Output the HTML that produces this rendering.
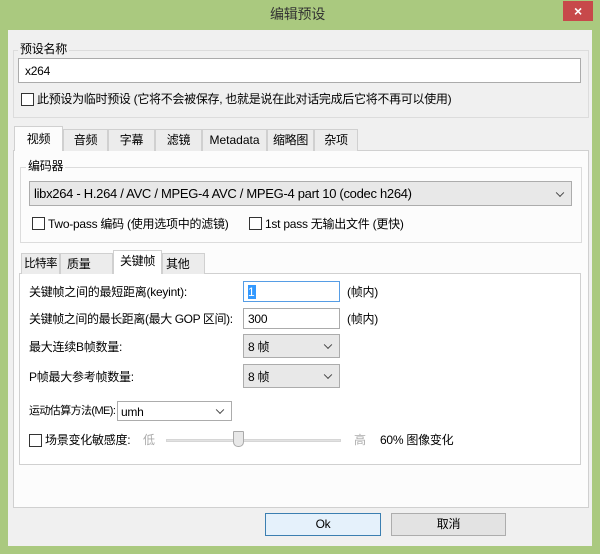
<!DOCTYPE html>
<html><head><meta charset="utf-8">
<style>
*{box-sizing:border-box;margin:0;padding:0}
body{width:600px;height:554px;background:#aac97f;position:relative;overflow:hidden;font-family:"Liberation Sans","Noto Sans CJK SC",sans-serif;font-size:12px;color:#000;letter-spacing:-0.25px}
.a{position:absolute}
.t{position:absolute;white-space:nowrap;line-height:14px}
.cb{position:absolute;width:13px;height:13px;border:1px solid #333;background:#fff}
.inp{position:absolute;background:#fff;border:1px solid #ababab}
.sel{position:absolute;background:#e8e8e8;border:1px solid #acacac}
.ar{position:absolute;right:8px;top:50%;width:6px;height:6px;border-right:1.5px solid #444;border-bottom:1.5px solid #444;transform:translateY(-70%) rotate(45deg)}
.tab{position:absolute;background:#ececec;border:1px solid #d0d0d0;border-bottom:none;text-align:center;line-height:20px;letter-spacing:-0.3px}
.tab.s{background:#fcfcfc}
.btn{position:absolute;background:#e3e3e3;border:1px solid #adadad;text-align:center;line-height:20px}
</style></head><body>
<div class="t" style="left:270px;top:7px;font-size:14px;color:#333">编辑预设</div>
<div class="a" style="left:563px;top:1px;width:30px;height:20px;background:#c7494a;color:#fff;text-align:center;line-height:20px;font-size:14px;font-weight:bold">×</div>
<div class="a" style="left:8px;top:30px;width:584px;height:516px;background:#f0f0f0"></div>
<div class="a" style="left:13px;top:50px;width:576px;height:68px;border:1px solid #dcdcdc"></div>
<div class="t" style="left:18px;top:42px;background:#f0f0f0;padding:0 2px">预设名称</div>
<div class="inp" style="left:18px;top:58px;width:563px;height:25px"></div>
<div class="t" style="left:25px;top:64px">x264</div>
<div class="cb" style="left:21px;top:93px"></div>
<div class="t" style="left:37px;top:92px;letter-spacing:-0.3px">此预设为临时预设 (它将不会被保存, 也就是说在此对话完成后它将不再可以使用)</div>
<div class="a" style="left:13px;top:150px;width:576px;height:358px;background:#fcfcfc;border:1px solid #d0d0d0"></div>
<div class="tab" style="left:63px;top:129px;width:45px;height:22px">音频</div>
<div class="tab" style="left:108px;top:129px;width:47px;height:22px">字幕</div>
<div class="tab" style="left:155px;top:129px;width:47px;height:22px">滤镜</div>
<div class="tab" style="left:202px;top:129px;width:65px;height:22px;letter-spacing:0">Metadata</div>
<div class="tab" style="left:267px;top:129px;width:47px;height:22px">缩略图</div>
<div class="tab" style="left:314px;top:129px;width:44px;height:22px">杂项</div>
<div class="tab s" style="left:14px;top:126px;width:49px;height:25px;line-height:24px">视频</div>
<div class="a" style="left:20px;top:167px;width:562px;height:76px;border:1px solid #dcdcdc"></div>
<div class="t" style="left:26px;top:159px;background:#fcfcfc;padding:0 2px">编码器</div>
<div class="sel" style="left:29px;top:181px;width:543px;height:25px"><span class="t" style="left:4px;top:5px;font-size:13px;letter-spacing:-0.3px">libx264 - H.264 / AVC / MPEG-4 AVC / MPEG-4 part 10 (codec h264)</span><i class="ar"></i></div>
<div class="cb" style="left:32px;top:217px"></div>
<div class="t" style="left:48px;top:217px">Two-pass 编码 (使用选项中的滤镜)</div>
<div class="cb" style="left:249px;top:217px"></div>
<div class="t" style="left:265px;top:217px">1st pass 无输出文件 (更快)</div>
<div class="a" style="left:19px;top:273px;width:562px;height:192px;background:#fff;border:1px solid #d0d0d0"></div>
<div class="tab" style="left:21px;top:253px;width:39px;height:21px;font-size:11.5px;letter-spacing:-0.6px">比特率</div>
<div class="tab" style="left:60px;top:253px;width:53px;height:21px;text-align:left;padding-left:6px">质量</div>
<div class="tab" style="left:162px;top:253px;width:43px;height:21px;text-align:left;padding-left:3px">其他</div>
<div class="tab s" style="left:113px;top:250px;width:49px;height:24px;background:#fff">关键帧</div>
<div class="t" style="left:29px;top:285px">关键帧之间的最短距离(keyint):</div>
<div class="inp" style="left:243px;top:281px;width:97px;height:21px;border-color:#569de5"></div>
<div class="a" style="left:248px;top:285px;width:8px;height:14px;background:#3399ff;color:#fff;line-height:14px">1</div>
<div class="t" style="left:347px;top:285px">(帧内)</div>
<div class="t" style="left:29px;top:312px;letter-spacing:-0.4px">关键帧之间的最长距离(最大 GOP 区间):</div>
<div class="inp" style="left:243px;top:308px;width:97px;height:21px"></div>
<div class="t" style="left:248px;top:312px">300</div>
<div class="t" style="left:347px;top:312px">(帧内)</div>
<div class="t" style="left:29px;top:340px">最大连续B帧数量:</div>
<div class="sel" style="left:243px;top:334px;width:97px;height:24px"><span class="t" style="left:4px;top:5px">8 帧</span><i class="ar"></i></div>
<div class="t" style="left:29px;top:370px">P帧最大参考帧数量:</div>
<div class="sel" style="left:243px;top:364px;width:97px;height:24px"><span class="t" style="left:4px;top:5px">8 帧</span><i class="ar"></i></div>
<div class="t" style="left:29px;top:404px;font-size:11px;letter-spacing:-0.6px">运动估算方法(ME):</div>
<div class="inp" style="left:117px;top:401px;width:115px;height:20px;border-color:#acacac"><span class="t" style="left:3px;top:3px">umh</span><i class="ar"></i></div>
<div class="cb" style="left:29px;top:434px"></div>
<div class="t" style="left:45px;top:433px">场景变化敏感度:</div>
<div class="t" style="left:143px;top:433px;color:#aaa">低</div>
<div class="a" style="left:166px;top:439px;width:175px;height:3px;background:#e2e2e2;border:1px solid #d6d6d6"></div>
<div class="a" style="left:233px;top:431px;width:11px;height:16px;background:#e8e8e8;border:1px solid #aaa;border-radius:1px 1px 5px 5px"></div>
<div class="t" style="left:354px;top:433px;color:#aaa">高</div>
<div class="t" style="left:380px;top:433px">60% 图像变化</div>
<div class="btn" style="left:265px;top:513px;width:116px;height:23px;border-color:#3c7fb1;background:#e5f1fb">Ok</div>
<div class="btn" style="left:391px;top:513px;width:115px;height:23px">取消</div>
</body></html>
